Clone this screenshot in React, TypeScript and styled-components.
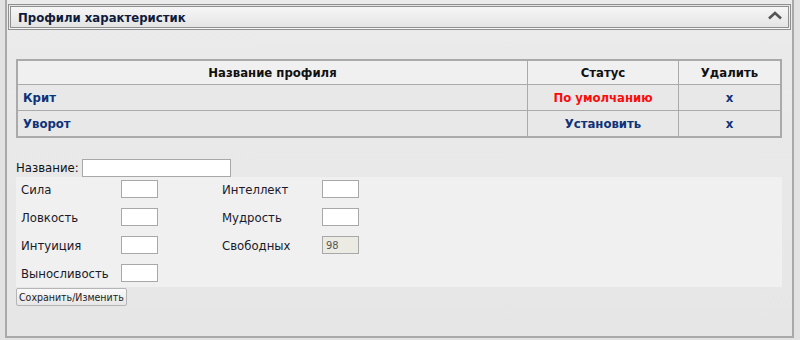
import React from 'react';
import styled, { createGlobalStyle } from 'styled-components';

const GlobalStyle = createGlobalStyle`
  html, body {
    margin: 0;
    padding: 0;
    background: #e2e2e2;
  }
  body {
    font-family: Tahoma, "DejaVu Sans Condensed", "DejaVu Sans", sans-serif;
    font-size: 12px;
  }
`;

interface Profile {
  name: string;
  isDefault: boolean;
}

const profiles: Profile[] = [
  { name: 'Крит', isDefault: true },
  { name: 'Уворот', isDefault: false },
];

const stats = [
  ['Сила', 'Интеллект'],
  ['Ловкость', 'Мудрость'],
  ['Интуиция', 'Свободных'],
  ['Выносливость', null],
];

const App: React.FC = () => {
  return (
    <Page>
      <GlobalStyle />
      <Panel>
        <Header>
          <Title>Профили характеристик</Title>
          <Collapse>
            <svg width="14" height="9" viewBox="0 0 14 9">
              <path d="M1 7.5 L7 2 L13 7.5" fill="none" stroke="#555" strokeWidth="2.6" />
            </svg>
          </Collapse>
        </Header>

        <Body>
          <Table>
            <thead>
              <tr>
                <Th>Название профиля</Th>
                <Th width={150}>Статус</Th>
                <Th width={101}>Удалить</Th>
              </tr>
            </thead>
            <tbody>
              {profiles.map((p) => (
                <tr key={p.name}>
                  <Td>{p.name}</Td>
                  <Td center isRed={p.isDefault}>
                    {p.isDefault ? 'По умолчанию' : 'Установить'}
                  </Td>
                  <Td center>x</Td>
                </tr>
              ))}
            </tbody>
          </Table>

          <NameRow>
            <span>Название:</span>
            <NameInput />
          </NameRow>

          <StatsBox>
            {stats.map(([left, right]) => (
              <StatRow key={left as string}>
                <StatLabel>{left}</StatLabel>
                <SmallInput />
                {right && (
                  <>
                    <StatLabel second>{right}</StatLabel>
                    {right === 'Свободных' ? (
                      <SmallInput disabled defaultValue="98" />
                    ) : (
                      <SmallInput />
                    )}
                  </>
                )}
              </StatRow>
            ))}
          </StatsBox>
          <SaveButton>Сохранить/Изменить</SaveButton>
        </Body>
      </Panel>
    </Page>
  );
};

const Page = styled.div`
  width: 800px;
  height: 340px;
  padding: 0 6px 0 5px;
  box-sizing: border-box;
`;

const Panel = styled.div`
  height: 338px;
  box-sizing: border-box;
  border: 2px solid #a9a9a9;
  border-top: none;
  background: linear-gradient(#ebebeb, #e6e6e6);
  padding: 4px 1px 0;
`;

const Header = styled.div`
  height: 26px;
  box-sizing: border-box;
  border: 3px double #8f8f8f;
  background: linear-gradient(#f6f6f6, #e4e4e4);
  display: flex;
  align-items: center;
  justify-content: space-between;
  padding: 0 6px 0 7px;
`;

const Title = styled.div`
  font-weight: bold;
  font-size: 13px;
  color: #0f1a3c;
`;

const Collapse = styled.div`
  display: flex;
  align-items: center;
  margin-top: -3px;
`;

const Body = styled.div`
  padding: 29px 9px 0 8px;
`;

const Table = styled.table`
  width: 100%;
  border-collapse: collapse;
  border: 2px solid #aaa;
  font-weight: bold;
  font-size: 13px;
`;

const Th = styled.th<{ width?: number }>`
  height: 23px;
  background: #f0f0f0;
  border: 1px solid #aaa;
  color: #111;
  padding: 0;
  ${(p) => (p.width ? `width: ${p.width}px;` : '')}
`;

const Td = styled.td<{ center?: boolean; isRed?: boolean }>`
  height: 25px;
  border: 1px solid #aaa;
  padding: 0 5px;
  text-align: ${(p) => (p.center ? 'center' : 'left')};
  color: ${(p) => (p.isRed ? '#ff0a0a' : '#0e3378')};
  background: #e8e8e8;
`;

const NameRow = styled.div`
  display: flex;
  align-items: center;
  gap: 3px;
  margin-top: 20px;
  height: 19px;
  font-size: 13px;
  color: #111;
`;

const NameInput = styled.input`
  width: 149px;
  height: 18px;
  box-sizing: border-box;
  border: 1px solid #a8a8a8;
  background: #fff;
  padding: 1px 3px;
`;

const StatsBox = styled.div`
  background: #f0f0f0;
  padding: 3px 5px 5px;
  display: flex;
  flex-direction: column;
  gap: 10px;
`;

const StatRow = styled.div`
  display: flex;
  align-items: center;
  height: 18px;
`;

const StatLabel = styled.span<{ second?: boolean }>`
  width: 100px;
  margin-left: ${(p) => (p.second ? '64px' : '0')};
  font-size: 13px;
  color: #1a1a2a;
`;

const SmallInput = styled.input`
  width: 37px;
  height: 18px;
  box-sizing: border-box;
  border: 1px solid #a8a8a8;
  background: #fff;
  font-size: 11px;
  font-family: inherit;
  padding: 0 3px;
  color: #333;

  &:disabled {
    background: #ebebe4;
    color: #555;
  }
`;

const SaveButton = styled.button`
  margin-top: 1px;
  height: 18px;
  padding: 0 2px;
  font-family: inherit;
  font-size: 10.5px;
  color: #222;
  background: linear-gradient(#fafafa, #e6e6e6);
  border: 1px solid #b5b5b5;
  border-radius: 2px;
`;

export default App;
